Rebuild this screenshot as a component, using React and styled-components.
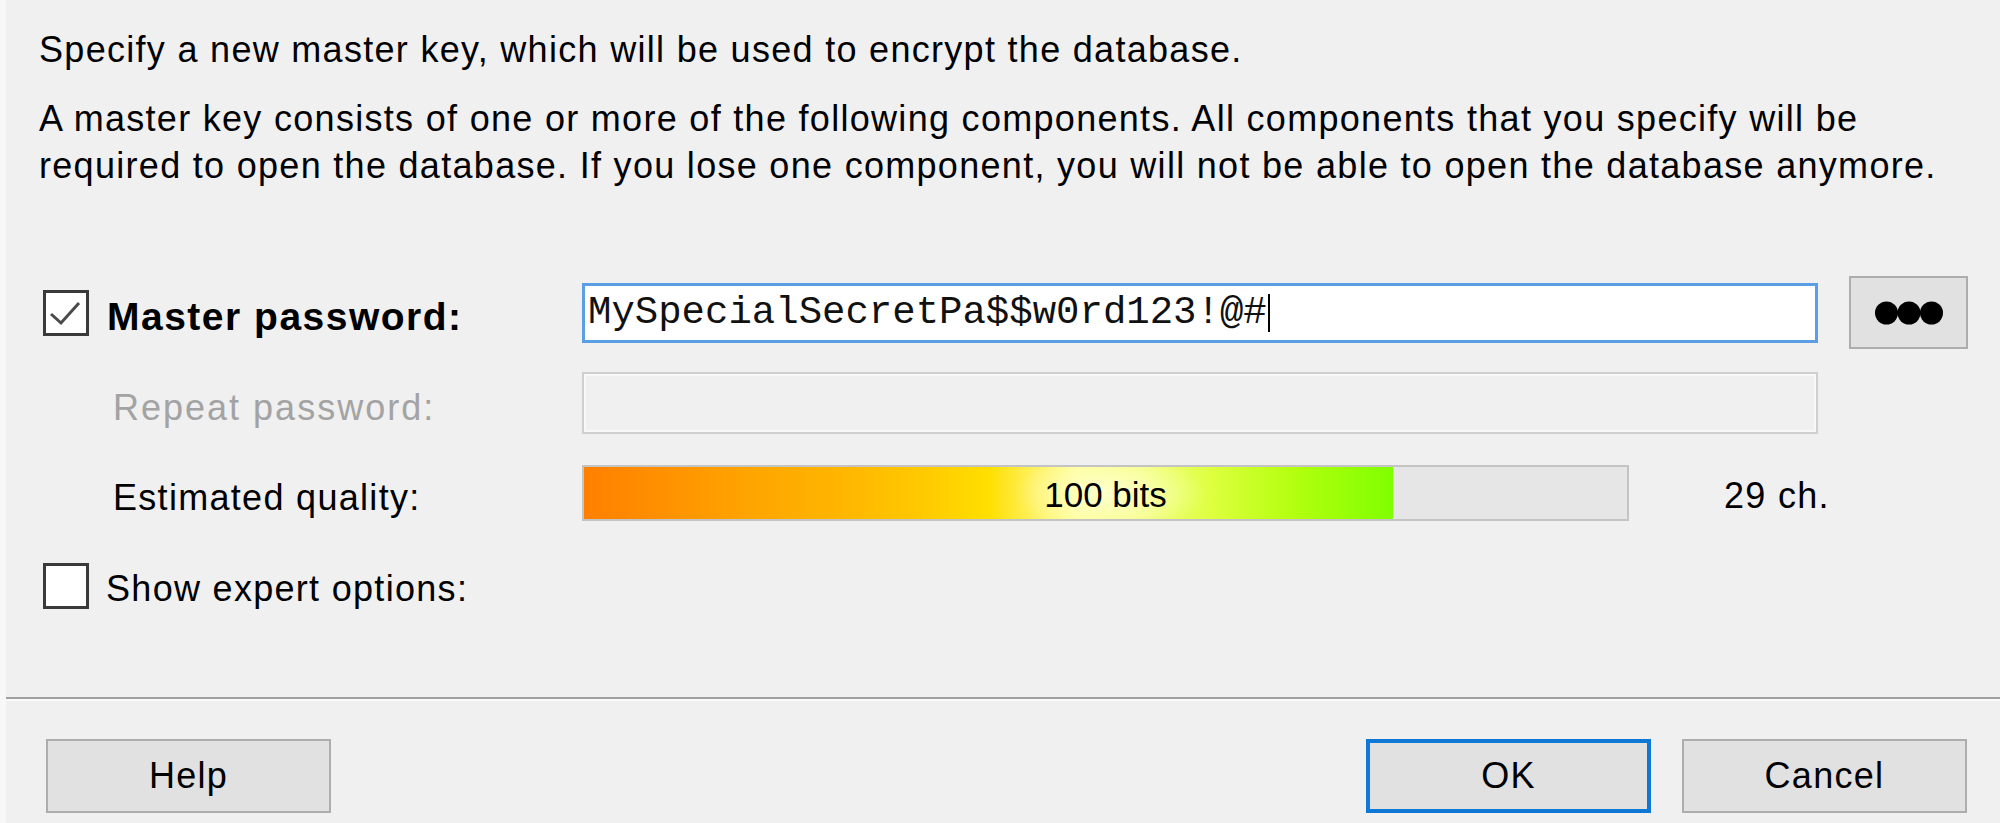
import React from 'react';
import styled, { createGlobalStyle } from 'styled-components';

const GlobalStyle = createGlobalStyle`
  html, body {
    margin: 0;
    padding: 0;
    background: #f0f0f0;
  }
  body {
    font-family: "Liberation Sans", Arial, sans-serif;
  }
  * {
    box-sizing: border-box;
  }
`;

const Dialog = styled.div`
  height: 823px;
  display: flex;
  flex-direction: column;
  background: #f0f0f0;
  border-left: 6px solid #f8f8f8;
  color: #000;
  font-size: 36px;
  letter-spacing: 1.3px;
  overflow: hidden;
`;

const Main = styled.div`
  flex: 1;
  padding-top: 26px;
`;

const Intro = styled.div`
  padding-left: 33px;
  line-height: 47px;
  white-space: nowrap;

  p {
    margin: 0;
  }
  p + p {
    margin-top: 22px;
  }
`;

const Form = styled.div`
  margin-top: 87px;
  padding-left: 37px;
  display: flex;
  flex-direction: column;
`;

const Row = styled.div`
  display: grid;
  grid-template-columns: 539px 1236px 150px;
  align-items: center;
  height: ${p => p.$h}px;
  margin-top: ${p => p.$mt || 0}px;
`;

const LabelCell = styled.div`
  display: flex;
  align-items: center;
  gap: ${p => p.$gap || 18}px;
  padding-left: ${p => p.$indent || 0}px;
  color: ${p => (p.$muted ? '#a3a3a3' : '#000')};
  letter-spacing: ${p => (p.$muted ? '2px' : 'inherit')};
  white-space: nowrap;
`;

const LabelText = styled.span`
  padding-top: ${p => (p.$tight ? 6 : 9)}px;
  font-weight: ${p => (p.$bold ? 'bold' : 'normal')};
  font-size: ${p => (p.$bold ? '39px' : 'inherit')};
  letter-spacing: ${p => (p.$bold ? '1.5px' : 'inherit')};
`;

const Box = styled.span`
  width: 46px;
  height: 46px;
  flex: none;
  border: 3px solid #3a3a3a;
  background: #fff;
  display: flex;
  align-items: center;
  justify-content: center;
`;

const TextBox = styled.div`
  height: ${p => p.$h}px;
  display: flex;
  align-items: center;
  padding-left: 3px;
  background: ${p => (p.$disabled ? '#f0f0f0' : '#fff')};
  border: ${p => (p.$disabled ? '2px solid #cfcfcf' : '3px solid #5b9ee4')};
  box-shadow: ${p => (p.$disabled ? 'inset 0 0 0 2px #f8f8f8' : 'none')};
  font-family: "Liberation Mono", "Courier New", monospace;
  font-size: 39px;
  letter-spacing: 0;
  color: #111;
`;

const Caret = styled.span`
  width: 2px;
  height: 38px;
  background: #000;
  margin-left: 1px;
`;

const DotsButton = styled.button`
  justify-self: end;
  height: 73px;
  width: 119px;
  padding: 0;
  background: #e1e1e1;
  border: 2px solid #adadad;
  display: flex;
  align-items: center;
  justify-content: center;
`;

const QualityCell = styled.div`
  display: flex;
  align-items: center;
`;

const Bar = styled.div`
  position: relative;
  flex: none;
  width: 1047px;
  height: 56px;
  background: #e6e6e6;
  border: 2px solid #c4c4c4;
`;

const Fill = styled.div`
  height: 100%;
  background:
    radial-gradient(ellipse 12% 75% at 65% 50%, rgba(255, 255, 215, 0.85), rgba(255, 255, 215, 0)),
    linear-gradient(
      to right,
      #ff8000 0%,
      #ff8a00 6%,
      #ffa400 20%,
      #ffb800 33%,
      #ffcc00 43%,
      #ffdf00 50%,
      #fff266 56%,
      #ffff9c 61%,
      #f4ff80 69%,
      #dcff3c 78%,
      #b2ff0e 88%,
      #80ff00 100%
    );
`;

const BarText = styled.span`
  position: absolute;
  inset: 0;
  display: flex;
  align-items: center;
  justify-content: center;
  padding-top: 4px;
  font-size: 35px;
  letter-spacing: 0;
`;

const CharCount = styled.span`
  margin-left: 95px;
  padding-top: 6px;
  white-space: nowrap;
`;

const Divider = styled.div`
  border-top: 2px solid #a0a0a0;
  border-bottom: 2px solid #fbfbfb;
`;

const Footer = styled.div`
  display: flex;
  gap: 31px;
  padding: 38px 33px 10px 40px;
`;

const Button = styled.button`
  width: 285px;
  height: 74px;
  margin-left: ${p => (p.$push ? 'auto' : '0')};
  background: #e1e1e1;
  border: ${p => (p.$primary ? '4px solid #0f78d7' : '2px solid #adadad')};
  font-family: "Liberation Sans", Arial, sans-serif;
  font-size: 36px;
  letter-spacing: 1.3px;
  color: #000;
  padding: 0;
`;

function CheckBox({ checked }) {
  return (
    <Box>
      {checked && (
        <svg width="38" height="38" viewBox="0 0 38 38">
          <polyline points="4,20 14,29 32,9" fill="none" stroke="#4a4a4a" strokeWidth="3" />
        </svg>
      )}
    </Box>
  );
}

function Dots() {
  return (
    <svg width="68" height="24" viewBox="0 0 68 24">
      <circle cx="11.5" cy="12" r="11.5" fill="#000" />
      <circle cx="34" cy="12" r="11.5" fill="#000" />
      <circle cx="56.5" cy="12" r="11.5" fill="#000" />
    </svg>
  );
}

export default function App() {
  const quality = 77.6;
  return (
    <>
      <GlobalStyle />
      <Dialog>
        <Main>
          <Intro>
            <p>Specify a new master key, which will be used to encrypt the database.</p>
            <p>
              A master key consists of one or more of the following components. All components that you specify will be
              <br />
              required to open the database. If you lose one component, you will not be able to open the database anymore.
            </p>
          </Intro>

          <Form>
            <Row $h={73}>
              <LabelCell>
                <CheckBox checked />
                <LabelText $bold>Master password:</LabelText>
              </LabelCell>
              <TextBox $h={60}>
                MySpecialSecretPa$$w0rd123!@#
                <Caret />
              </TextBox>
              <DotsButton>
                <Dots />
              </DotsButton>
            </Row>

            <Row $h={62} $mt={23}>
              <LabelCell $indent={70} $muted>
                <LabelText>Repeat password:</LabelText>
              </LabelCell>
              <TextBox $h={62} $disabled />
            </Row>

            <Row $h={56} $mt={31}>
              <LabelCell $indent={70}>
                <LabelText>Estimated quality:</LabelText>
              </LabelCell>
              <QualityCell>
                <Bar>
                  <Fill style={{ width: `${quality}%` }} />
                  <BarText>100 bits</BarText>
                </Bar>
                <CharCount>29 ch.</CharCount>
              </QualityCell>
            </Row>

            <Row $h={46} $mt={41}>
              <LabelCell $gap={17}>
                <CheckBox />
                <LabelText $tight>Show expert options:</LabelText>
              </LabelCell>
            </Row>
          </Form>
        </Main>

        <Divider />

        <Footer>
          <Button>Help</Button>
          <Button $push $primary>OK</Button>
          <Button>Cancel</Button>
        </Footer>
      </Dialog>
    </>
  );
}
